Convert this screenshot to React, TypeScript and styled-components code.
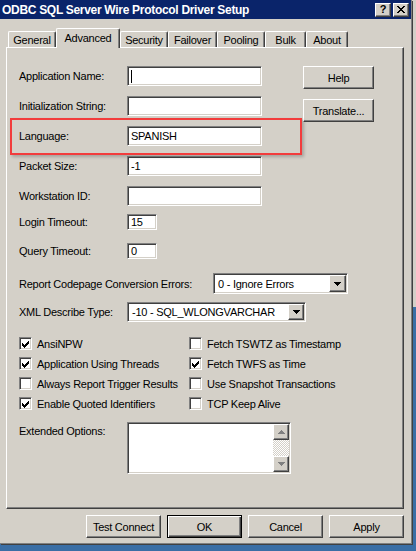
import React from "react";
import styled, { createGlobalStyle, css } from "styled-components";

const face = "#d4d0c8";
const shadow = "#808080";
const darkShadow = "#404040";

const GlobalStyle = createGlobalStyle`
  * { box-sizing: border-box; }
  html, body { margin: 0; padding: 0; height: 100%; }
  body {
    overflow: hidden;
    background: linear-gradient(${face} 0 307px, #3a6ea5 307px);
    font-family: "Liberation Sans", Arial, sans-serif;
    font-size: 11px;
    letter-spacing: -0.25px;
    color: #000;
  }
`;

const raised = css`
  border: 1px solid;
  border-color: #fff ${darkShadow} ${darkShadow} #fff;
  box-shadow: inset -1px -1px ${shadow};
  background: ${face};
`;

const sunken = css`
  border: 1px solid;
  border-color: ${shadow} #fff #fff ${shadow};
  box-shadow: inset 1px 1px ${darkShadow}, inset -1px -1px ${face};
  background: #fff;
`;

const Window = styled.div`
  position: relative;
  width: 412px;
  height: 544px;
  background: ${face};
  border-right: 1px solid ${shadow};
  border-bottom: 1px solid ${shadow};
  box-shadow: 1px 1px 0 ${darkShadow};
  display: flex;
  flex-direction: column;
`;

const TitleBar = styled.div`
  height: 19px;
  background: #0a246a;
  color: #fff;
  font-weight: bold;
  display: flex;
  align-items: center;
  padding: 0 2px 0 2px;
`;

const Title = styled.span`
  flex: 1;
  white-space: nowrap;
  font-size: 12px;
  letter-spacing: -0.3px;
`;

const CaptionButton = styled.div`
  ${raised};
  width: 16px;
  height: 14px;
  margin-left: 2px;
  display: flex;
  align-items: center;
  justify-content: center;
  color: #000;
  font-weight: bold;
  font-size: 11px;
  line-height: 1;
`;

const Main = styled.div`
  padding: 9px 7px 0 6px;
  display: flex;
  flex-direction: column;
`;

const TabStrip = styled.div`
  position: relative;
  z-index: 1;
  height: 20px;
  margin-bottom: -1px;
  padding-left: 2px;
  display: flex;
  align-items: flex-start;
`;

const Tab = styled.div<{ $w: number; $active?: boolean }>`
  width: ${(p) => p.$w}px;
  height: ${(p) => (p.$active ? 20 : 16)}px;
  margin-top: ${(p) => (p.$active ? 0 : 3)}px;
  background: ${face};
  border-top: 1px solid #fff;
  border-left: 1px solid #fff;
  border-right: 1px solid ${darkShadow};
  border-radius: 2px 2px 0 0;
  box-shadow: inset -1px 0 ${shadow};
  display: flex;
  align-items: ${(p) => (p.$active ? "flex-start" : "center")};
  padding-top: ${(p) => (p.$active ? 3 : 0)}px;
  justify-content: center;
  white-space: nowrap;
`;

const Panel = styled.div`
  position: relative;
  height: 462px;
  border-top: 1px solid #fff;
  border-left: 1px solid #fff;
  border-right: 1px solid ${darkShadow};
  border-bottom: 1px solid ${darkShadow};
  box-shadow: inset -1px -1px ${shadow};
  padding: 18px 0 0 12px;
  display: flex;
  flex-direction: column;
`;

const Highlight = styled.div`
  position: absolute;
  left: 3px;
  top: 70px;
  width: 292px;
  height: 37px;
  border: 2px solid #f23c3c;
  box-shadow: 2px 2px 3px rgba(0, 0, 0, 0.22);
  pointer-events: none;
`;

const TopSection = styled.div`
  display: flex;
`;

const Fields = styled.div`
  width: 243px;
  display: flex;
  flex-direction: column;
  gap: 10px;
`;

const SideButtons = styled.div`
  margin-left: 41px;
  display: flex;
  flex-direction: column;
  gap: 10px;
`;

const Row = styled.div<{ $top?: number; $align?: string }>`
  display: flex;
  align-items: ${(p) => p.$align ?? "center"};
  margin-top: ${(p) => p.$top ?? 0}px;
`;

const Label = styled.span<{ $w?: number; $pad?: number }>`
  width: ${(p) => p.$w ?? 108}px;
  flex-shrink: 0;
  white-space: nowrap;
  padding-top: ${(p) => p.$pad ?? 0}px;
`;

const TextBox = styled.div<{ $w: number; $h?: number }>`
  ${sunken};
  width: ${(p) => p.$w}px;
  height: ${(p) => p.$h ?? 20}px;
  padding: 0 2px 0 3px;
  display: flex;
  align-items: center;
  white-space: nowrap;
  overflow: hidden;
`;

const Caret = styled.span`
  width: 1px;
  height: 13px;
  background: #000;
`;

const Button = styled.div<{ $w: number; $default?: boolean }>`
  ${raised};
  width: ${(p) => p.$w}px;
  height: 23px;
  display: flex;
  align-items: center;
  justify-content: center;
  white-space: nowrap;
  ${(p) =>
    p.$default &&
    css`
      border: 1px solid #000;
      box-shadow: inset 1px 1px #fff, inset -1px -1px ${darkShadow}, inset -2px -2px ${shadow};
    `}
`;

const Select = styled.div<{ $w: number; $h?: number }>`
  ${sunken};
  width: ${(p) => p.$w}px;
  height: ${(p) => p.$h ?? 21}px;
  padding: 1px;
  display: flex;
  align-items: stretch;
`;

const SelectValue = styled.span`
  flex: 1;
  padding-left: 3px;
  display: flex;
  align-items: center;
  white-space: nowrap;
  overflow: hidden;
`;

const ArrowButton = styled.div<{ $w?: number }>`
  ${raised};
  width: ${(p) => p.$w ?? 17}px;
  flex-shrink: 0;
  display: flex;
  align-items: center;
  justify-content: center;
`;

const Checks = styled.div`
  margin-top: 15px;
  display: grid;
  grid-template-columns: 170px auto;
  grid-auto-rows: 13px;
  row-gap: 7px;
`;

const CheckItem = styled.div`
  display: flex;
  align-items: center;
  gap: 5px;
  white-space: nowrap;
`;

const Box = styled.div`
  ${sunken};
  width: 13px;
  height: 13px;
  padding: 1px;
  flex-shrink: 0;
`;

const Memo = styled.div`
  ${sunken};
  width: 164px;
  height: 52px;
  padding: 1px;
  display: flex;
  justify-content: flex-end;
`;

const ScrollBar = styled.div`
  width: 16px;
  display: flex;
  flex-direction: column;
`;

const ScrollTrack = styled.div`
  flex: 1;
  background: repeating-conic-gradient(#fff 0 25%, ${face} 0 50%) 0 0 / 2px 2px;
`;

const ScrollArrow = styled(ArrowButton)`
  height: 16px;
  width: 16px;
`;

const ButtonRow = styled.div`
  margin-top: 6px;
  display: flex;
  justify-content: flex-end;
  gap: 6px;
`;

const Arrow: React.FC<{ up?: boolean; disabled?: boolean }> = ({ up, disabled }) => (
  <svg width="7" height="4" viewBox="0 0 7 4" shapeRendering="crispEdges">
    <path
      d={up ? "M3 0h1v1h1v1h1v1h1v1h-7v-1h1v-1h1v-1h1z" : "M0 0h7v1h-1v1h-1v1h-1v1h-1v-1h-1v-1h-1v-1h-1z"}
      fill={disabled ? shadow : "#000"}
    />
  </svg>
);

const CheckMark = () => (
  <svg width="9" height="9" viewBox="0 0 9 9" shapeRendering="crispEdges">
    <path
      d="M1 3h1v3h-1z M2 4h1v3h-1z M3 5h1v3h-1z M4 4h1v3h-1z M5 3h1v3h-1z M6 2h1v3h-1z M7 1h1v3h-1z"
      fill="#000"
    />
  </svg>
);

const CloseGlyph = () => (
  <svg width="8" height="7" viewBox="0 0 8 7" shapeRendering="crispEdges">
    <path
      d="M0 0h2v1h1v1h2v-1h1v-1h2v1h-1v1h-1v1h-1v1h1v1h1v1h1v1h-2v-1h-1v-1h-2v1h-1v1h-2v-1h1v-1h1v-1h1v-1h-1v-1h-1v-1h-1z"
      fill="#000"
    />
  </svg>
);

const Check: React.FC<{ checked?: boolean; label: string }> = ({ checked, label }) => (
  <CheckItem>
    <Box>{checked ? <CheckMark /> : null}</Box>
    <span>{label}</span>
  </CheckItem>
);

const tabs = [
  { name: "General", w: 48 },
  { name: "Advanced", w: 64, active: true },
  { name: "Security", w: 48 },
  { name: "Failover", w: 49 },
  { name: "Pooling", w: 48 },
  { name: "Bulk", w: 41 },
  { name: "About", w: 42 },
];

const textFields = [
  { label: "Application Name:", value: "", caret: true },
  { label: "Initialization String:", value: "" },
  { label: "Language:", value: "SPANISH" },
  { label: "Packet Size:", value: "-1" },
  { label: "Workstation ID:", value: "" },
];

export default function App() {
  return (
    <>
      <GlobalStyle />
      <Window>
        <TitleBar>
          <Title>ODBC SQL Server Wire Protocol Driver Setup</Title>
          <CaptionButton>?</CaptionButton>
          <CaptionButton>
            <CloseGlyph />
          </CaptionButton>
        </TitleBar>

        <Main>
          <TabStrip>
            {tabs.map((t) => (
              <Tab key={t.name} $w={t.w} $active={t.active}>
                {t.name}
              </Tab>
            ))}
          </TabStrip>

          <Panel>
            <TopSection>
              <Fields>
                {textFields.map((f) => (
                  <Row key={f.label}>
                    <Label>{f.label}</Label>
                    <TextBox $w={135}>{f.caret ? <Caret /> : f.value}</TextBox>
                  </Row>
                ))}
              </Fields>
              <SideButtons>
                <Button $w={71}>Help</Button>
                <Button $w={71}>Translate...</Button>
              </SideButtons>
            </TopSection>

            <Row $top={8}>
              <Label>Login Timeout:</Label>
              <TextBox $w={30} $h={16}>15</TextBox>
            </Row>
            <Row $top={13}>
              <Label>Query Timeout:</Label>
              <TextBox $w={30} $h={16}>0</TextBox>
            </Row>
            <Row $top={14}>
              <Label $w={194}>Report Codepage Conversion Errors:</Label>
              <Select $w={135}>
                <SelectValue>0 - Ignore Errors</SelectValue>
                <ArrowButton>
                  <Arrow />
                </ArrowButton>
              </Select>
            </Row>
            <Row $top={8}>
              <Label>XML Describe Type:</Label>
              <Select $w={179} $h={20}>
                <SelectValue>-10 - SQL_WLONGVARCHAR</SelectValue>
                <ArrowButton $w={16}>
                  <Arrow />
                </ArrowButton>
              </Select>
            </Row>

            <Checks>
              <Check checked label="AnsiNPW" />
              <Check label="Fetch TSWTZ as Timestamp" />
              <Check checked label="Application Using Threads" />
              <Check checked label="Fetch TWFS as Time" />
              <Check label="Always Report Trigger Results" />
              <Check label="Use Snapshot Transactions" />
              <Check checked label="Enable Quoted Identifiers" />
              <Check label="TCP Keep Alive" />
            </Checks>

            <Row $top={12} $align="flex-start">
              <Label $pad={3}>Extended Options:</Label>
              <Memo>
                <ScrollBar>
                  <ScrollArrow>
                    <Arrow up disabled />
                  </ScrollArrow>
                  <ScrollTrack />
                  <ScrollArrow>
                    <Arrow disabled />
                  </ScrollArrow>
                </ScrollBar>
              </Memo>
            </Row>

            <Highlight />
          </Panel>

          <ButtonRow>
            <Button $w={75}>Test Connect</Button>
            <Button $w={75} $default>
              OK
            </Button>
            <Button $w={75}>Cancel</Button>
            <Button $w={75}>Apply</Button>
          </ButtonRow>
        </Main>
      </Window>
    </>
  );
}
